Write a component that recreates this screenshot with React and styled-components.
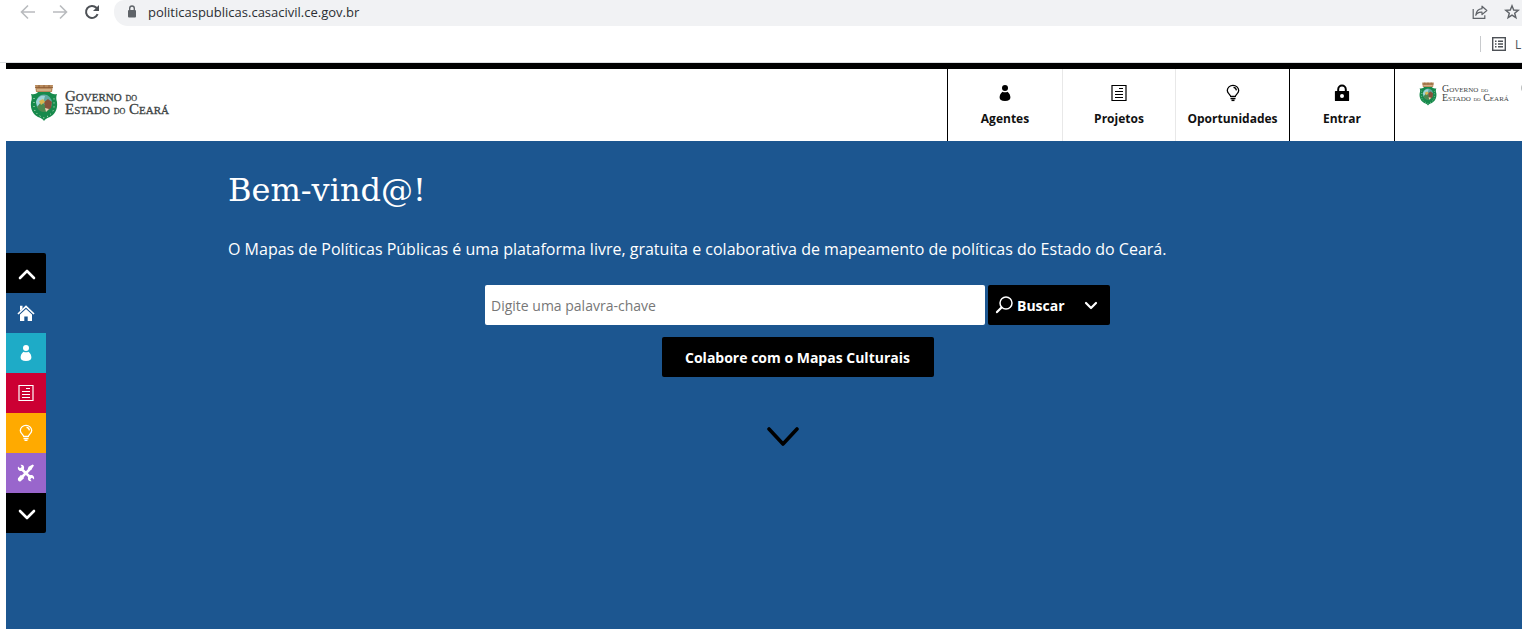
import React from "react";
import styled, { createGlobalStyle, css } from "styled-components";

const blue = "#1c5690";
const sans = `"Open Sans", "Noto Sans", sans-serif`;

const GlobalStyle = createGlobalStyle`
  *, *::before, *::after { box-sizing: border-box; }
  html, body, #root { height: 100%; }
  body { margin: 0; background: #fff; color: #111; font-family: ${sans}; overflow-x: hidden; }
  button, input { font-family: inherit; }
`;

const Page = styled.div`
  display: flex;
  flex-direction: column;
  min-height: 100vh;
`;

/* Browser chrome */
const AddressRow = styled.div`
  display: flex;
  height: 26px;
  padding-left: 20px;
  align-items: flex-start;
`;

const NavButton = styled.button`
  display: flex;
  padding: 4px 0;
  margin-right: 16px;
  border: 0;
  background: none;
  color: ${(p) => (p.$active ? "#4d5156" : "#b9bbbe")};
`;

const AddressBar = styled.div`
  display: flex;
  flex: 1;
  align-items: center;
  height: 26px;
  padding: 0 2px 2px 13px;
  margin-left: -2px;
  border-radius: 10px 0 0 14px;
  background: #f1f2f4;
  color: #5f6368;
`;

const Address = styled.span`
  flex: 1;
  padding-left: 11px;
  color: #2b2e33;
  font-size: 13px;
  line-height: 20px;
`;

const AddressActions = styled.div`
  display: flex;
  gap: 16px;
`;

const BookmarkRow = styled.div`
  display: flex;
  justify-content: flex-end;
  align-items: center;
  height: 37px;
  border-bottom: 1px solid #dcdfe2;
`;

const Bookmark = styled.a`
  display: flex;
  align-items: center;
  gap: 9px;
  width: 42px;
  height: 16px;
  padding-left: 11px;
  border-left: 1px solid #c8cacd;
  color: #4d5156;
  font-size: 12px;
  text-decoration: none;
  white-space: nowrap;
  overflow: hidden;
  svg { flex: none; }
`;

/* Site */
const Site = styled.div`
  position: relative;
  display: flex;
  flex: 1;
  flex-direction: column;
  margin-left: 6px;
`;

const Header = styled.header`
  display: flex;
  height: 78px;
  border-top: 6px solid #000;
`;

const Brand = styled.a`
  display: flex;
  align-items: center;
  gap: ${(p) => (p.$small ? 5 : 7)}px;
  align-self: flex-start;
  padding: ${(p) => (p.$small ? 12 : 15)}px 0 0 24px;
  color: #3c4343;
  text-decoration: none;
`;

const BrandText = styled.span`
  font-family: "Liberation Serif", serif;
  font-variant: small-caps;
  font-size: ${(p) => (p.$small ? 10 : 15)}px;
  line-height: ${(p) => (p.$small ? 8 : 12)}px;
  white-space: nowrap;
  -webkit-text-stroke: ${(p) => (p.$small ? "0" : "0.3px")} currentColor;
  small { font-size: ${(p) => (p.$small ? 7 : 11)}px; }
`;

const HeaderRight = styled.div`
  display: flex;
  margin-left: auto;
`;

const Menu = styled.nav`
  display: flex;
  border-left: 1px solid #000;
  border-right: 1px solid #000;
`;

const MenuLink = styled.a`
  display: flex;
  flex-direction: column;
  align-items: center;
  gap: 7px;
  width: ${(p) => p.$width}px;
  padding-top: 15px;
  border-left: ${(p) => (p.$edge ? `1px solid ${p.$edge}` : "0")};
  color: #111;
  font-size: 12px;
  font-weight: 700;
  line-height: 20px;
  text-decoration: none;
  svg { color: #000; }
`;

const Partner = styled.div`
  display: flex;
  justify-content: space-between;
  width: 127px;
  overflow: hidden;
`;

const PartnerDot = styled.span`
  flex: none;
  width: 12px;
  height: 12px;
  margin: 13px -11px 0 0;
  border-radius: 50%;
  background: #b9bdbd;
`;

const Hero = styled.main`
  flex: 1;
  background: ${blue};
  color: #fff;
`;

const HeroContent = styled.section`
  display: flex;
  flex-direction: column;
  max-width: 1361px;
  padding: 26px 0 0 222px;
`;

const Title = styled.h1`
  margin: 0;
  font-family: "DejaVu Serif", serif;
  font-size: 32px;
  font-weight: 400;
  line-height: 46px;
`;

const Lead = styled.p`
  margin: 24px 0;
  font-size: 16px;
  line-height: 24px;
`;

const SearchForm = styled.form`
  display: flex;
  justify-content: center;
  gap: 3px;
  height: 40px;
`;

const SearchInput = styled.input`
  width: 500px;
  padding: 0 6px;
  border: 0;
  border-radius: 2px;
  background: #fff;
  color: #333;
  font-size: 14px;
  &::placeholder { color: #777; opacity: 1; }
`;

const blackButton = css`
  border: 0;
  border-radius: 2px;
  background: #000;
  color: #fff;
  font-size: 14px;
  font-weight: 700;
`;

const SearchButton = styled.button`
  ${blackButton}
  display: flex;
  align-items: center;
  width: 122px;
  padding: 0 12px 0 7px;
  span { flex: 1; padding-left: 4px; text-align: left; }
`;

const JoinButton = styled.button`
  ${blackButton}
  align-self: center;
  width: 272px;
  height: 40px;
  margin-top: 12px;
`;

const ScrollButton = styled.button`
  display: block;
  margin: 50px auto 0;
  padding: 0 0 0 38px;
  border: 0;
  background: none;
  color: #000;
`;

const SideNav = styled.nav`
  position: absolute;
  top: 190px;
  left: 0;
  display: flex;
  flex-direction: column;
  width: 40px;
  border-radius: 0 2px 2px 0;
  overflow: hidden;
`;

const SideLink = styled.a`
  display: flex;
  align-items: center;
  justify-content: center;
  height: 40px;
  padding-left: ${(p) => (p.$arrow ? 2 : 0)}px;
  padding-top: ${(p) => (p.$arrow ? 2 : 0)}px;
  background: ${(p) => p.$color};
  color: #fff;
`;

/* Icons */
const Svg = ({ size = 18, w, h, box, children, ...rest }) => (
  <svg width={w || size} height={h || size} viewBox={box || `0 0 ${w || size} ${h || size}`}
    fill="none" stroke="currentColor" aria-hidden="true" {...rest}>{children}</svg>
);

const Back = () => <Svg size={16} strokeWidth="1.6"><path d="M15 8H2M8 1.5 1.5 8 8 14.5" /></Svg>;
const Forward = () => <Svg size={16} strokeWidth="1.6"><path d="M1 8h13M8 1.5 14.5 8 8 14.5" /></Svg>;
const Reload = () => (
  <Svg size={16} strokeWidth="2">
    <path d="M13.6 10.2A6 6 0 1 1 12.4 3.8L14 5.6" />
    <path d="M15 1v6H9z" fill="currentColor" stroke="none" />
  </Svg>
);
const SmallLock = () => (
  <Svg w={10} h={14}>
    <rect x="1" y="5" width="8" height="7.5" rx="1" fill="currentColor" stroke="none" />
    <path d="M2.7 5.5V3.3a2.3 2.3 0 0 1 4.6 0v2.2" strokeWidth="1.4" />
  </Svg>
);
const Share = () => (
  <Svg size={16} strokeWidth="1.2">
    <path d="M1.2 5v9.3h11.6v-3" />
    <path d="M10 2.2 14.8 6.5 10 10.6V8.2C7 8 5 9 3.8 11.3 4.2 7.5 6.5 5 10 4.7z" strokeLinejoin="round" />
  </Svg>
);
const Star = () => (
  <Svg size={16} strokeWidth="1.4">
    <path d="m8 1.8 1.7 4.2 4.5.3-3.5 2.9 1.2 4.5L8 11.2l-3.9 2.5 1.2-4.5L1.8 6.3 6.3 6z" />
  </Svg>
);
const ReadingList = () => (
  <Svg size={14} strokeWidth="1.4">
    <rect x=".7" y=".7" width="12.6" height="12.6" />
    <path d="M3 4.2h1.5M3 7h1.5M3 9.8h1.5M6 4.2h5M6 7h5M6 9.8h5" />
  </Svg>
);
const Person = () => (
  <Svg size={18}>
    <g fill="currentColor" stroke="none">
      <circle cx="9" cy="4" r="3" />
      <path d="M6.500 7.700c1.500.7 3.500.7 5 0 1.800 1.300 3 3.700 2.900 5.800-.1 2.300-1.600 3.500-5.400 3.500s-5.300-1.200-5.400-3.500c-.1-2.100 1.100-4.500 2.900-5.800z" />
    </g>
  </Svg>
);
const Doc = () => (
  <Svg size={18} strokeWidth="1">
    <path d="M2 1.5h14v15H2z" strokeWidth="1.2" />
    <path d="M9 4.5h4M5 7.5h8M5 10.5h8M5 13.5h8" strokeWidth="1.2" />
  </Svg>
);
const Bulb = () => (
  <Svg size={18} strokeWidth="1.3">
    <path d="M6.4 12c-.2-1.600-3.100-2.600-3.100-5.400a5.700 5.300 0 0 1 11.400 0c0 2.800-2.900 3.800-3.100 5.400" />
    <path d="M6 12.400h6M6.500 14.500h5" />
    <path d="M7.500 16.300h3" strokeWidth="1.600" />
    <path d="M9.500 3.300c1.700.2 2.700 1.300 2.900 3" />
  </Svg>
);
const Lock = () => (
  <Svg size={18}>
    <path d="M5.2 8V5.500a3.800 3.900 0 0 1 7.600 0V8" strokeWidth="2" />
    <path fillRule="evenodd" fill="currentColor" stroke="none" d="M2.500 7h13a.6.6 0 0 1 .6.6v8.800a.6.6 0 0 1-.6.6h-13a.6.6 0 0 1-.6-.6V7.600a.6.6 0 0 1 .6-.6zM9 10a2 2 0 1 0 0 4 2 2 0 0 0 0-4z" />
  </Svg>
);
const Home = () => (
  <Svg size={18}>
    <path d="m1 10 8-7.500L17 10" strokeWidth="1.700" />
    <path d="M3 1.800h2.500v3L3 7zM9 5l6 5.500V17h-4.300v-4.500H7.300V17H3v-6.500z" fill="currentColor" stroke="none" />
  </Svg>
);
const Tools = () => (
  <Svg size={18}>
    <path d="m4 4.500 10 9.500M14 4 4 14" strokeWidth="2.500" />
    <path d="M1 2.500 3 4.300 4.800 3 3.500.8C5.800.3 7.700 2 7 4.700L4.700 7C2.200 7.500.2 5.500 1 2.500zM17 1.500l-2.600 4-2.700.8-1-1 .9-2.600L15.700.5zM17 15.500l-2-1.800-1.800 1.300 1.300 2.200c-2.300.5-4.200-1.200-3.500-3.900l2.300-2.300c2.500-.5 4.500 1.500 3.700 4.500zM1 14.200l3-3.500 3.200 3.200-3.500 3.300C2 18 .3 16.300 1 14.200z" fill="currentColor" stroke="none" />
  </Svg>
);
const Magnifier = () => (
  <Svg size={18} strokeWidth="1.500">
    <circle cx="11" cy="7" r="6" />
    <path d="m6.500 11.500-4.500 4.600" strokeWidth="2.200" strokeLinecap="round" />
  </Svg>
);
const Chevron = ({ w = 18, h = 11, up, weight = 2.6 }) => (
  <Svg w={w} h={h} strokeWidth={weight} strokeLinecap="round" strokeLinejoin="round">
    <path d={up ? `M2 ${h - 2} ${w / 2} 2 ${w - 2} ${h - 2}` : `M2 2 ${w / 2} ${h - 2} ${w - 2} 2`} />
  </Svg>
);

const Crest = ({ small }) => (
  <Svg w={small ? 18 : 28} h={small ? 26 : 38} box="0 0 28 38" stroke="none">
    <path d="M5 1h18l-1 7H6z" fill="#b88a5c" />
    <path d="M5 3.500h18M9 1v3M14 1v3M19 1v3" stroke="#8a5b35" strokeWidth=".8" />
    <path d="M7 6h14" stroke="#e0c6a2" strokeWidth="1.200" />
    <path d="M1 10c4 1 6-1 7-2h12c1 1 3 3 7 2-1 3-1 5 0 8 1 8-3 13-7 15-3 1-5 2-6 4-1-2-3-3-6-4-4-2-8-7-7-15 1-3 1-5 0-8z" fill="#178a4c" />
    <ellipse cx="14" cy="19" rx="8" ry="8.500" fill="#5fa9a1" />
    <path d="M6 18c2-6 6-7 9-6l-2 7-5 5z" fill="#9ed4d8" />
    <path d="m7 23 4-5 5 4 5-2c0 5-3 8-7 8-3 0-6-2-7-5z" fill="#4c8850" />
    <path d="m14 18 4-3 4 3-1 6-5 3z" fill="#86513b" />
    <path d="m9 17 4-2 2 3-4 3z" fill="#d9b54e" />
    <path d="m15 24 4 1-3 3z" fill="#ead7b9" />
    <path d="M4 14v10c1 5 5 8 10 10 5-2 9-5 10-10V14" stroke="#d5edcf" strokeWidth="1" strokeDasharray="1 3" />
  </Svg>
);

const Logo = ({ small }) => (
  <Brand href="#" $small={small}>
    <Crest small={small} />
    <BrandText $small={small}>
      Governo <small>do</small><br />Estado <small>do</small> Ceará
    </BrandText>
  </Brand>
);

const menu = [
  { label: "Agentes", icon: <Person />, width: 114 },
  { label: "Projetos", icon: <Doc />, edge: "#e8e8e8", width: 113 },
  { label: "Oportunidades", icon: <Bulb />, edge: "#e8e8e8", width: 114 },
  { label: "Entrar", icon: <Lock />, edge: "#000", width: 105 },
];

const side = [
  { label: "Subir", color: "#000", icon: <Chevron up />, arrow: true },
  { label: "Início", color: blue, icon: <Home /> },
  { label: "Agentes", color: "#1eabc7", icon: <Person /> },
  { label: "Projetos", color: "#cc0033", icon: <Doc /> },
  { label: "Oportunidades", color: "#ffaa00", icon: <Bulb /> },
  { label: "Ferramentas", color: "#9966cc", icon: <Tools /> },
  { label: "Descer", color: "#000", icon: <Chevron />, arrow: true },
];

export default function App() {
  return (
    <Page>
      <GlobalStyle />
      <AddressRow>
        <NavButton aria-label="Voltar"><Back /></NavButton>
        <NavButton aria-label="Avançar"><Forward /></NavButton>
        <NavButton aria-label="Recarregar" $active><Reload /></NavButton>
        <AddressBar>
          <SmallLock />
          <Address>politicaspublicas.casacivil.ce.gov.br</Address>
          <AddressActions><Share /><Star /></AddressActions>
        </AddressBar>
      </AddressRow>
      <BookmarkRow>
        <Bookmark href="#"><ReadingList />L</Bookmark>
      </BookmarkRow>
      <Site>
        <Header>
          <Logo />
          <HeaderRight>
            <Menu>
              {menu.map((m) => (
                <MenuLink key={m.label} href="#" $edge={m.edge} $width={m.width}>
                  {m.icon}{m.label}
                </MenuLink>
              ))}
            </Menu>
            <Partner><Logo small /><PartnerDot /></Partner>
          </HeaderRight>
        </Header>
        <Hero>
          <HeroContent>
            <Title>Bem-vind@!</Title>
            <Lead>O Mapas de Políticas Públicas é uma plataforma livre, gratuita e colaborativa de mapeamento de políticas do Estado do Ceará.</Lead>
            <SearchForm onSubmit={(e) => e.preventDefault()}>
              <SearchInput aria-label="Palavra-chave" placeholder="Digite uma palavra-chave" />
              <SearchButton><Magnifier /><span>Buscar</span><Chevron w={14} h={9} weight={2.2} /></SearchButton>
            </SearchForm>
            <JoinButton type="button">Colabore com o Mapas Culturais</JoinButton>
          </HeroContent>
          <ScrollButton aria-label="Rolar para baixo"><Chevron w={32} h={19} weight={3.6} /></ScrollButton>
        </Hero>
        <SideNav>
          {side.map((s) => (
            <SideLink key={s.label} href="#" aria-label={s.label} $color={s.color} $arrow={s.arrow}>{s.icon}</SideLink>
          ))}
        </SideNav>
      </Site>
    </Page>
  );
}
